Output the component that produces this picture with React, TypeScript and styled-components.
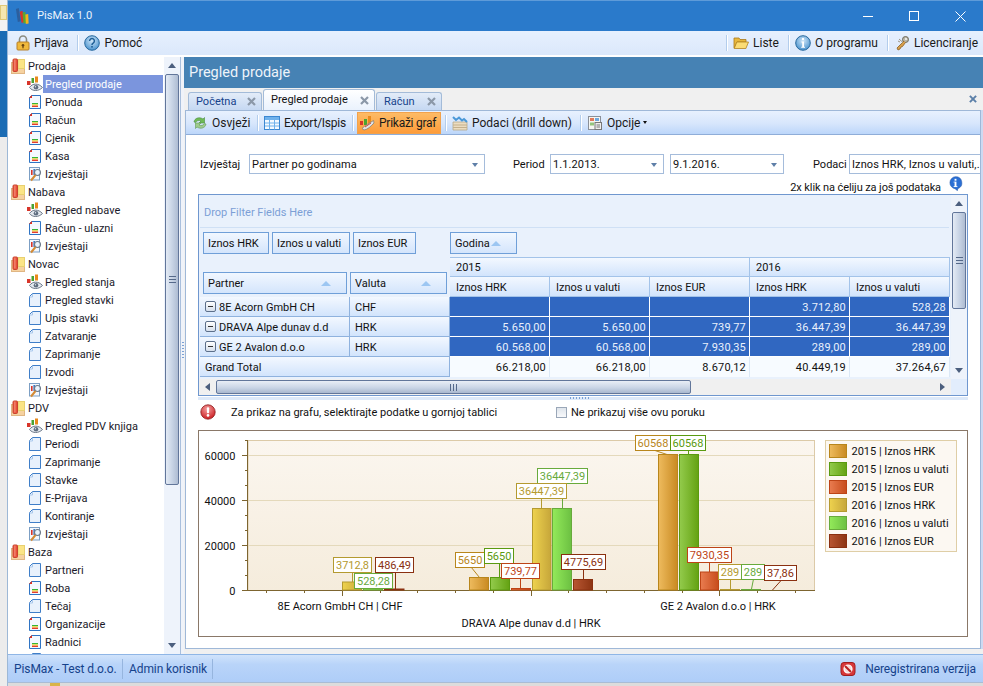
import React from "react";
import styled, { createGlobalStyle } from "styled-components";

const FONT = `Roboto, "Noto Sans", "Liberation Sans", sans-serif`;

const Global = createGlobalStyle`
  html, body { margin: 0; padding: 0; width: 983px; height: 686px; overflow: hidden; background: #e4e4e4; }
  #root { width: 983px; height: 686px; }
  * { box-sizing: border-box; }
`;

const Page = styled.div`
  display: flex; width: 983px; height: 686px; overflow: hidden;
  font: 11px/14px ${FONT}; color: #111;
`;
const DesktopStrip = styled.div`
  width: 7px; flex: none; display: flex; flex-direction: column;
  background: #ececec;
`;
const StripTop = styled.div`
  height: 31px; padding-top: 5px; background: #f2f2f2;
  &::before { content: ""; display: block; height: 13px; background: #f6e7b0; border: 1px solid #e0c878; }
`;
const StripBlue = styled.div`height: 106px; background: #1b6cb4;`;
const Win = styled.div`
  flex: 1; min-width: 0; display: flex; flex-direction: column;
  border-left: 1px solid #9db8d6;
`;
const TitleBar = styled.div`
  height: 31px; flex: none; display: flex; align-items: center; padding-left: 7px;
  background: #2a7acb; border-top: 1px solid #5e9bd9; color: #fff;
`;
const TitleText = styled.span`font-size: 11.2px; margin-left: 6px; flex: 1; color: #eaf3fc;`;
const WinBtn = styled.div`width: 46px; height: 30px; display: flex; align-items: center; justify-content: center;`;

const MainBar = styled.div`
  height: 26px; flex: none; display: flex; align-items: center; padding: 0 4px 0 7px; font-size: 12px;
  background: linear-gradient(#e6f0fe, #dbe8fb);
  border-bottom: 2px solid; border-image: linear-gradient(#9cbde6 50%, #fff 50%) 1;
`;
const ToolSep = styled.span<{ $ml?: number }>`
  width: 1px; height: 16px; background: #b3cdec; box-shadow: 1px 0 0 #fff; flex: none;
  margin: 0 5px 0 ${(p) => p.$ml ?? 8}px;
`;
const ToolItem = styled.div<{ $active?: boolean; $w?: number; $tight?: boolean }>`
  display: flex; align-items: center; gap: 4px; white-space: nowrap; height: 22px; padding: 0 1px;
  color: #1a1a1a; flex: none;
  ${(p) => p.$w && `width: ${p.$w}px;`}
  ${(p) => p.$tight && `letter-spacing: -0.25px;`}
  ${(p) => p.$active && `background: linear-gradient(#fdbb66, #fd9c3a); border: 1px solid #f2a24c; margin-left: -1px;`}
`;
const Spacer = styled.div`flex: 1;`;

const Body = styled.div`flex: 1; min-height: 0; display: flex;`;
const Sidebar = styled.div`width: 156px; flex: none; overflow: hidden; background: #fff;`;
const GroupRow = styled.div`height: 18px; display: flex; align-items: center; padding-left: 2px; gap: 2px; color: #1a1a2a;`;
const GroupLabel = styled.span`padding-top: 2px;`;
const ItemRow = styled.div`height: 18px; display: flex; align-items: center; padding-left: 18px;`;
const IconSlot = styled.div`width: 17px; flex: none; display: flex; justify-content: center;`;
const ItemLabel = styled.div<{ $active?: boolean }>`
  flex: 1; height: 18px; line-height: 20px; padding-left: 2px; margin-right: 1px;
  color: ${(p) => (p.$active ? "#fff" : "#1a1a2a")};
  background: ${(p) => (p.$active ? "#7b95dd" : "transparent")};
`;

const Scroll = styled.div<{ $vertical?: boolean; $bg?: string; $width?: number }>`
  display: flex; align-items: stretch; flex: none;
  flex-direction: ${(p) => (p.$vertical ? "column" : "row")};
  background: ${(p) => p.$bg || "#eef3fb"};
  ${(p) => p.$width && `width: ${p.$width}px;`}
`;
const ScrollBtn = styled.div<{ $dir: "up" | "down" | "left" | "right" }>`
  flex: none; display: flex; align-items: center; justify-content: center;
  ${(p) => (p.$dir === "up" || p.$dir === "down" ? "height: 17px;" : "width: 17px;")}
  ${(p) => p.$dir === "right" && "margin-left: auto;"}
  ${(p) => p.$dir === "down" && "margin-top: auto;"}
  &::before {
    content: ""; width: 0; height: 0; border-style: solid;
    ${(p) =>
      p.$dir === "up"
        ? "border-width: 0 4.5px 5px; border-color: transparent transparent #4c5f7e;"
        : p.$dir === "down"
        ? "border-width: 5px 4.5px 0; border-color: #4c5f7e transparent transparent;"
        : p.$dir === "left"
        ? "border-width: 4.5px 5px 4.5px 0; border-color: transparent #4c5f7e transparent transparent;"
        : "border-width: 4.5px 0 4.5px 5px; border-color: transparent transparent transparent #4c5f7e;"}
  }
`;
const Thumb = styled.div<{ $vertical?: boolean; $size: number }>`
  flex: none; display: flex; align-items: center; justify-content: center;
  border: 1px solid #62769a; border-radius: 2px;
  ${(p) =>
    p.$vertical
      ? `height: ${p.$size}px; margin: 0 1px; background: linear-gradient(90deg, #e4ebf5, #c6d2e4 55%, #aebcd2);`
      : `width: ${p.$size}px; margin: 1px 0; background: linear-gradient(#e9eef6, #cad5e6 55%, #a9b8cf);`}
`;
const Grip = styled.div<{ $vertical?: boolean }>`
  ${(p) =>
    p.$vertical
      ? `width: 7px; height: 7px; background: repeating-linear-gradient(#55698a 0 1px, transparent 1px 3px);`
      : `width: 7px; height: 7px; background: repeating-linear-gradient(90deg, #55698a 0 1px, transparent 1px 3px);`}
`;
const SideSplit = styled.div`
  width: 4px; flex: none; display: flex; align-items: center; background: #f0f3f9;
  border-left: 1px solid #a9bfdc; padding-bottom: 10px;
  &::before { content: ""; width: 2px; height: 18px; margin-left: 1px; background: repeating-linear-gradient(#7aa0d4 0 1px, transparent 1px 3px); }
`;

const Main = styled.div`flex: 1; min-width: 0; display: flex; flex-direction: column; background: #f0f0f0;`;
const MainHead = styled.div`
  height: 31px; flex: none; display: flex; align-items: center; padding: 1px 0 0 5px;
  background: #4682b4; color: #eef4fa; font-size: 14.5px;
`;
const TabStrip = styled.div`height: 22px; flex: none; display: flex; align-items: flex-end; padding-left: 4px;`;
const Tab = styled.div<{ $active?: boolean; $w: number }>`
  width: ${(p) => p.$w}px; display: flex; align-items: center; justify-content: space-between;
  border: 1px solid #a3bbd8; border-bottom: none; border-radius: 3px 3px 0 0;
  margin-right: 1px; padding: 0 5px 0 7px;
  ${(p) =>
    p.$active
      ? `height: 21px; background: linear-gradient(#fff, #eaf2fd); color: #111;`
      : `height: 18px; background: linear-gradient(#e3ecf8, #c5d8f2); color: #15428b;`}
`;
const TabClose = styled.div`margin-left: auto;`;
const StripClose = styled.div`margin-left: auto; margin-right: 6px; align-self: center;`;

const TabPanel = styled.div`
  flex: 1; min-height: 0; display: flex; flex-direction: column; margin-left: 1px; margin-bottom: 5px;
  background: #fff; border: 1px solid #9fb8d8; border-top: none;
  box-shadow: 3px 0 0 #cdd9f1;
  width: 796px;
`;
const PanelBar = styled.div`
  height: 25px; flex: none; display: flex; align-items: center; padding-left: 5px; font-size: 12px;
  background: linear-gradient(#e8f1fe, #d7e6fc 55%, #bcd6fa);
  border-bottom: 1px solid #8fadd8; border-top: 1px solid #9fb8d8;
`;
const Caret = styled.span`width: 0; height: 0; margin-left: -1px; border-style: solid; border-width: 3px 2.5px 0; border-color: #111 transparent transparent;`;

const FormRow = styled.div`display: flex; align-items: center; height: 20px; margin-top: 19px; padding-left: 14px; white-space: nowrap;`;
const FormLabel = styled.span<{ $left?: number; $w: number }>`
  width: ${(p) => p.$w}px; flex: none; padding: 2px 0 0 ${(p) => p.$left || 0}px;
`;
const Select = styled.div<{ $w: number; $plain?: boolean }>`
  width: ${(p) => p.$w}px; height: 20px; flex: none; display: flex; align-items: center; justify-content: space-between;
  border: 1px solid #a5bcdb; padding: 2px 6px 0 2px; background: #fff; overflow: hidden; letter-spacing: 0.1px;
  ${(p) => p.$plain && "border-right: none; padding-right: 0;"}
`;
const SelectArrow = styled.span`width: 0; height: 0; border-style: solid; border-width: 4px 3.5px 0; border-color: #5f7fa8 transparent transparent;`;
const HintRow = styled.div`display: flex; justify-content: flex-end; align-items: flex-start; height: 20px; padding: 2px 17px 0 0; gap: 7px;`;
const HintText = styled.span`margin-top: 5px; letter-spacing: -0.1px;`;

const Pivot = styled.div`
  margin-left: 12px; width: 770px; height: 202px; flex: none;
  display: grid; grid-template-columns: 1fr 16px; grid-template-rows: 1fr 16px;
  border: 1px solid #6f97cf; background: #e9f1fc;
`;
const PivotInner = styled.div`min-width: 0; display: flex; flex-direction: column; padding-left: 1px;`;
const FilterArea = styled.div`height: 33px; flex: none; display: flex; align-items: center; padding: 4px 0 0 4px; color: #7c9fd6; border-bottom: 1px solid #cfe0f5; width: 749px;`;
const DataFields = styled.div`height: 29px; flex: none; display: flex; align-items: flex-start; padding: 4px 0 0 3px; gap: 3px;`;
const Chip = styled.div<{ $w: number; $gapLeft?: number; $sorted?: boolean }>`
  width: ${(p) => p.$w}px; height: 22px; flex: none; display: flex; align-items: center; justify-content: space-between;
  margin-left: ${(p) => p.$gapLeft || 0}px; padding: 2px ${(p) => (p.$sorted ? 15 : 4)}px 0 4px;
  border: 1px solid #6f9fd8; background: linear-gradient(#f1f7ff, #d4e5fc);
  white-space: nowrap;
`;
const ChipSort = styled.span`width: 0; height: 0; margin-top: -2px; border-style: solid; border-width: 0 5px 5px; border-color: transparent transparent #9cc6f2;`;
const HeadBlock = styled.div`height: 40px; flex: none; display: grid; grid-template-columns: 250px 1fr;`;
const RowFields = styled.div`display: flex; align-items: flex-end; gap: 3px; padding: 0 0 3px 3px;`;
const ColHeads = styled.div`display: grid; grid-template-columns: repeat(5, 100px); grid-template-rows: 20px 20px;`;
const HeadCell = styled.div<{ $span?: number; $top?: boolean }>`
  ${(p) => p.$span && `grid-column: span ${p.$span};`}
  ${(p) => p.$top && `border-top: 1px solid #a3c3e9;`}
  display: flex; align-items: center; padding: 2px 0 0 6px; white-space: nowrap;
  background: linear-gradient(#f3f8ff, #d2e4fc);
  border-right: 1px solid #a3c3e9; border-bottom: 1px solid #a3c3e9;
`;
const DataRow = styled.div`height: 20px; flex: none; display: grid; grid-template-columns: 150px 100px repeat(5, 100px);`;
const RowHead = styled.div<{ $span?: number }>`
  ${(p) => p.$span && `grid-column: span ${p.$span};`}
  display: flex; align-items: center; gap: 3px; padding: 2px 0 0 5px; white-space: nowrap;
  background: linear-gradient(#f3f8ff, #d2e4fc);
  border-right: 1px solid #8fb2de; border-bottom: 1px solid #8fb2de;
`;
const Expander = styled.span`
  width: 11px; height: 11px; margin-top: -2px; flex: none; display: flex; align-items: center; justify-content: center;
  border: 1px solid #5c6f8a; border-radius: 2px; background: linear-gradient(#fff, #d5dfec);
  &::before { content: ""; width: 5px; height: 1px; background: #333; }
`;
const ValueCell = styled.div<{ $total?: boolean }>`
  display: flex; align-items: center; justify-content: flex-end; padding: 2px 3px 0 0; letter-spacing: 0.2px;
  ${(p) =>
    p.$total
      ? `background: #f7fbff; color: #111; border-right: 1px solid #dbe8f6;`
      : `background: #3067c1; color: #eaf1fc; border-right: 1px solid #fff; border-bottom: 1px solid #fff;`}
`;
const PivotCorner = styled.div`background: #e2edfc;`;
const SplitBar = styled.div`
  margin: 1px 0 0 12px; width: 770px; height: 3px; flex: none; background: #dde9f9;
  display: flex; justify-content: center;
  &::before { content: ""; width: 20px; height: 2px; margin-left: -7px; background: repeating-linear-gradient(90deg, #7aa0d4 0 1px, transparent 1px 3px); }
`;
const MsgRow = styled.div`height: 26px; flex: none; display: flex; align-items: center; padding: 0 0 2px 14px; white-space: nowrap;`;
const MsgText = styled.span`margin-left: 15px; width: 325px; flex: none; padding-top: 2px;`;
const MsgNote = styled.span`padding-top: 2px;`;
const Check = styled.span`width: 11px; height: 11px; flex: none; margin-right: 4px; border: 1px solid #9aa7b8; background: linear-gradient(#dfe5ec, #f8f9fb);`;
const ChartBox = styled.div`
  margin: 4px 0 0 12px; width: 770px; height: 207px; flex: none; border: 1px solid #8a7868; background: #fff; overflow: hidden;
`;
const ChartSvg = styled.svg`display: block; font: 11px ${FONT};`;

const Status = styled.div`
  height: 29px; flex: none; display: flex; align-items: center; padding: 0 5px 0 0; font-size: 12px; letter-spacing: -0.1px;
  background: linear-gradient(#d0e3fb, #b9d4f9 35%, #aecdf8);
  border-top: 1px solid #8fb6e6; border-bottom: 1px solid #a9bcd4; color: #15428b;
`;
const StatusCell = styled.div<{ $w: number }>`
  width: ${(p) => p.$w}px; height: 20px; display: flex; align-items: center; padding-left: 6px; border-right: 1px solid #96b5de; white-space: nowrap;
`;
const StatusRight = styled.div`margin-left: auto; display: flex; align-items: center; gap: 9px; white-space: nowrap; padding-right: 2px;`;
const BottomStrip = styled.div`
  height: 3px; flex: none; background: #dcdcdc; padding-left: 42px;
  &::before { content: ""; display: block; width: 10px; height: 3px; background: #d9b44a; }
`;

/* ---------- icons ---------- */
const S = (p: React.SVGProps<SVGSVGElement>) => <svg width={16} height={16} viewBox="0 0 16 16" style={{ display: "block", flex: "none" }} {...p} />;

const IconLogo = () => (
  <S width={16} height={18} viewBox="0 0 17 19">
    <path d="M1 2l3-1 2 14-3 1z" fill="#2c5f9e" />
    <path d="M5 5l3-1 2 12-3 1z" fill="#d8352a" />
    <path d="M8 6l3-1 1 12-3 .5z" fill="#5aa82e" />
    <path d="M11 8l3-.5.5 10-3 .5z" fill="#f2b41c" />
  </S>
);
const IconLock = () => (
  <S width={14} height={16} viewBox="1 0 14 16">
    <path d="M4.5 7V4.5a3.5 3.5 0 0 1 7 0V7" fill="none" stroke="#8b8b80" strokeWidth="1.6" />
    <rect x="2" y="7" width="12" height="8" rx="1" fill="#f0b93c" stroke="#b7802a" />
    <circle cx="8" cy="10.2" r="1.3" fill="#6a4512" />
    <rect x="7.4" y="10.5" width="1.2" height="2.8" fill="#6a4512" />
  </S>
);
const CircleIcon = ({ children, id }: { children: React.ReactNode; id: string }) => (
  <S>
    <defs>
      <radialGradient id={id} cx="50%" cy="35%" r="70%">
        <stop offset="0" stopColor="#cfe6f8" />
        <stop offset="1" stopColor="#3f8ccb" />
      </radialGradient>
    </defs>
    <circle cx="8" cy="8" r="7.3" fill={`url(#${id})`} stroke="#2a6a9e" />
    {children}
  </S>
);
const IconHelp = () => (
  <CircleIcon id="hlp">
    <path d="M5.6 6a2.4 2.4 0 1 1 3.6 2.1C8.4 8.6 8 9 8 10" fill="none" stroke="#1f5f96" strokeWidth="1.5" />
    <rect x="7.2" y="11" width="1.6" height="1.6" fill="#1f5f96" />
  </CircleIcon>
);
const IconInfo = () => (
  <CircleIcon id="inf">
    <rect x="7" y="3" width="2" height="2" fill="#fff" />
    <path d="M6.4 6.5H9v5.2h1v1H6.2v-1h1V7.5h-.8z" fill="#fff" />
  </CircleIcon>
);
const IconInfoBubble = () => (
  <S width={15} height={15}>
    <path d="M8 .7a6.6 6.6 0 0 1 2.4 12.8L10 15.6 7.6 13.6A6.5 6.5 0 0 1 8 .7z" fill="#2b6fd4" stroke="#1f56ac" strokeWidth=".6" />
    <rect x="7" y="3" width="2" height="2" fill="#fff" />
    <rect x="7" y="6" width="2" height="5.5" fill="#fff" />
    <rect x="6" y="6" width="1" height="1" fill="#fff" />
    <rect x="6" y="10.8" width="4" height="1" fill="#fff" />
  </S>
);
const IconFolderOpen = () => (
  <S>
    <path d="M1 3h5l1 1.5h6V7H4L1.5 13H1z" fill="#e8b83c" stroke="#a9791a" strokeWidth=".8" />
    <path d="M3.8 7H15.5l-2.6 6.5H1.2z" fill="#fbdc74" stroke="#b3831f" strokeWidth=".8" />
  </S>
);
const IconKeys = () => (
  <S>
    <circle cx="11.5" cy="4.5" r="3" fill="#b9b5a6" stroke="#6f6b5c" />
    <path d="M10 6L3 13l1 2 2-1 1-2 1.5-.5 3-4" fill="#d8a04c" stroke="#8a5e22" strokeWidth=".8" />
    <circle cx="12" cy="4" r=".9" fill="#fff" />
    <path d="M5 4l4 3.5M4 6l2 1" stroke="#9a9486" strokeWidth="1" />
  </S>
);
const IconFolderBook = () => (
  <S>
    <rect x="1.5" y="4.5" width="13" height="11" fill="#f6d2a0" stroke="#e0b684" />
    <rect x="8" y="1.5" width="6.5" height="9" fill="#fbe486" stroke="#e8d070" />
    <rect x="3" y="1" width="4.5" height="12.5" rx="1" fill="#e8503a" stroke="#c9442f" />
    <rect x="4.4" y="1.5" width="1" height="11" fill="#f59a84" />
  </S>
);
const IconChartEye = () => (
  <S width={17}>
    <rect x="0.5" y="5" width="3.5" height="4" fill="#d8352a" />
    <rect x="5" y="2" width="2.5" height="5" fill="#4aa332" />
    <rect x="8.5" y="0.5" width="3" height="6" fill="#e98a1c" />
    <path d="M3 11.5c3-4.5 9-4.5 13 0-4 4-10 4-13 0z" fill="#e4e9ef" stroke="#6c7888" />
    <circle cx="9.5" cy="11.3" r="2.3" fill="#5e6c7e" />
    <circle cx="9" cy="10.7" r=".7" fill="#dfe5ec" />
  </S>
);
const IconDoc = () => (
  <S>
    <path d="M4.5 1.5h9v13h-11v-11z" fill="#f4f8fe" stroke="#2f74c4" />
    <path d="M2 4l3-3v3z" fill="#e0301f" />
    <rect x="5" y="9" width="6" height="1.2" fill="#37b437" />
    <rect x="5" y="10.4" width="6" height="1.1" fill="#f2d21c" />
    <rect x="5" y="11.7" width="6" height="1.2" fill="#e4261a" />
  </S>
);
const IconBlank = () => (
  <S>
    <path d="M5.5 1.5h8v13h-11v-10z" fill="#e8f1fc" stroke="#3f7ec8" />
    <path d="M5.5 2v3h-3" fill="none" stroke="#a8c8ec" />
  </S>
);
const IconReport = () => (
  <S>
    <rect x="2.5" y="1.5" width="10" height="12.5" fill="#f4f8fd" stroke="#7c9fc4" />
    <rect x="4" y="4" width="1.6" height="5" fill="#d8352a" />
    <rect x="6.4" y="3" width="1.6" height="6" fill="#3b78c8" />
    <circle cx="10.5" cy="6.5" r="3" fill="#e9f2fb" fillOpacity=".8" stroke="#6c7a8a" strokeWidth="1.1" />
    <path d="M8.5 9L4 14.5" stroke="#d48a34" strokeWidth="2" />
  </S>
);
const IconRefresh = () => (
  <S>
    <path d="M2 7c.5-4 5.5-5.5 9-3l1.5-1.5V8H7l2-2C7 5 4.5 5.5 3.8 7.5z" fill="#6fbb55" stroke="#4a8c40" strokeWidth=".6" />
    <path d="M14 9c-.5 4-5.5 5.5-9 3l-1.5 1.5V8H9l-2 2c2 1 4.5.5 5.2-1.5z" fill="#9ecb8c" stroke="#5f9a55" strokeWidth=".6" />
  </S>
);
const IconTable = () => (
  <S>
    <rect x=".5" y="1.5" width="15" height="13" fill="#f4f9ff" stroke="#3b87d2" />
    <rect x="1" y="2" width="14" height="3" fill="#6fb1ec" />
    <path d="M1 8h14M1 11h14M5.5 5v9.5M10.5 5v9.5" stroke="#6fb1ec" strokeWidth="1" />
  </S>
);
const IconChartPen = () => (
  <S>
    <rect x="1" y="6" width="3" height="4" fill="#d8352a" />
    <rect x="5" y="4" width="3" height="6" fill="#4aa332" />
    <rect x="9" y="1" width="3" height="8" fill="#e98a1c" />
    <path d="M3 13.5c3-3 7-5 11.5-8L15 8c-3 3-6 6.5-10 7z" fill="#e3e3e3" stroke="#777" strokeWidth=".7" />
    <path d="M6 12l6-4" stroke="#c84a3a" />
  </S>
);
const IconDrill = () => (
  <S>
    <path d="M1 7h14v8H1z" fill="#ecdcc0" stroke="#b8a888" strokeWidth=".8" />
    <path d="M1 10h14M1 12.5h14" stroke="#c4b08c" />
    <path d="M1 2l3 3 3-2.5 3 3 2-1.5 3 3" fill="none" stroke="#4a98d8" strokeWidth="2" />
  </S>
);
const IconOptions = () => (
  <S>
    <rect x="1.5" y="1.5" width="12" height="13" fill="#f6f6f2" stroke="#8a8f98" />
    <rect x="3" y="3" width="4" height="3" fill="#e07a5a" />
    <rect x="8" y="3" width="4" height="3" fill="#6fa8dc" />
    <rect x="3" y="7.5" width="4" height="3" fill="#93c47d" />
    <rect x="8" y="7.5" width="6.5" height="7" fill="#eee" stroke="#777" />
    <path d="M9.5 10h3.5M9.5 12h3.5" stroke="#777" />
  </S>
);
const IconX = ({ color = "#8b98a8", size = 9 }: { color?: string; size?: number }) => (
  <svg width={size} height={size} viewBox="0 0 9 9" style={{ display: "block" }}>
    <path d="M1 1l7 7M8 1L1 8" stroke={color} strokeWidth="2.2" />
  </svg>
);
const IconAlert = () => (
  <S>
    <defs>
      <radialGradient id="alr" cx="45%" cy="30%" r="75%">
        <stop offset="0" stopColor="#f4a0a0" />
        <stop offset="1" stopColor="#c81418" />
      </radialGradient>
    </defs>
    <circle cx="8" cy="8" r="7.2" fill="url(#alr)" stroke="#8c1a1a" strokeWidth=".8" />
    <rect x="6.9" y="3.2" width="2.2" height="6" rx="1" fill="#fff" />
    <circle cx="8" cy="11.4" r="1.3" fill="#fff" />
  </S>
);
const IconNoEntry = () => (
  <S>
    <rect x="1" y="1.5" width="14" height="13" rx="3" fill="#d8383a" stroke="#a01c1e" />
    <circle cx="8" cy="8" r="4" fill="#f7dada" stroke="#fff" strokeWidth="1.2" />
    <path d="M5 5l6 6" stroke="#b8201f" strokeWidth="2" />
  </S>
);

/* ---------- data ---------- */
type Kind = "eye" | "doc" | "blank" | "rep";
const nav: { group: string; items: [string, Kind][] }[] = [
  { group: "Prodaja", items: [["Pregled prodaje", "eye"], ["Ponuda", "doc"], ["Račun", "doc"], ["Cjenik", "doc"], ["Kasa", "doc"], ["Izvještaji", "rep"]] },
  { group: "Nabava", items: [["Pregled nabave", "eye"], ["Račun - ulazni", "doc"], ["Izvještaji", "rep"]] },
  { group: "Novac", items: [["Pregled stanja", "eye"], ["Pregled stavki", "blank"], ["Upis stavki", "blank"], ["Zatvaranje", "blank"], ["Zaprimanje", "blank"], ["Izvodi", "blank"], ["Izvještaji", "rep"]] },
  { group: "PDV", items: [["Pregled PDV knjiga", "eye"], ["Periodi", "blank"], ["Zaprimanje", "blank"], ["Stavke", "blank"], ["E-Prijava", "blank"], ["Kontiranje", "blank"], ["Izvještaji", "rep"]] },
  { group: "Baza", items: [["Partneri", "blank"], ["Roba", "doc"], ["Tečaj", "blank"], ["Organizacije", "doc"], ["Radnici", "doc"], ["", "blank"]] },
];
const kindIcon = { eye: <IconChartEye />, doc: <IconDoc />, blank: <IconBlank />, rep: <IconReport /> };

const rows: { name: string; cur: string; vals: string[] }[] = [
  { name: "8E Acorn GmbH CH", cur: "CHF", vals: ["", "", "", "3.712,80", "528,28"] },
  { name: "DRAVA Alpe dunav d.d", cur: "HRK", vals: ["5.650,00", "5.650,00", "739,77", "36.447,39", "36.447,39"] },
  { name: "GE 2 Avalon d.o.o", cur: "HRK", vals: ["60.568,00", "60.568,00", "7.930,35", "289,00", "289,00"] },
];
const totals = ["66.218,00", "66.218,00", "8.670,12", "40.449,19", "37.264,67"];

const series = [
  { id: "s0", name: "2015 | Iznos HRK", a: "#eebb5e", b: "#c98a22", line: "#b8861c" },
  { id: "s1", name: "2015 | Iznos u valuti", a: "#93cb4c", b: "#64a212", line: "#5a9a10" },
  { id: "s2", name: "2015 | Iznos EUR", a: "#e97c50", b: "#c74c1c", line: "#bd4416" },
  { id: "s3", name: "2016 | Iznos HRK", a: "#eed24e", b: "#c6a63a", line: "#b49a30" },
  { id: "s4", name: "2016 | Iznos u valuti", a: "#93ea5a", b: "#6cc042", line: "#68aa3c" },
  { id: "s5", name: "2016 | Iznos EUR", a: "#b85632", b: "#8c3412", line: "#8a3010" },
];
const bars: [number, number, number, number][] = [
  [3, 342.5, 361.5, 582], [4, 363.5, 382.5, 588], [5, 384.5, 404, 589],
  [0, 469.5, 488.5, 577.5], [1, 490.5, 509.5, 577.5], [2, 511.5, 530.5, 588.5],
  [3, 532.5, 551, 508.5], [4, 552.5, 571.5, 508.5], [5, 573.5, 592.5, 579.5],
  [0, 658.5, 677.5, 454.5], [1, 679.5, 698.5, 454.5], [2, 700.5, 718.5, 572],
  [3, 720.5, 739.5, 589.5], [4, 741.5, 760.5, 589.5],
];
// series, text, box x0, x1, y0, line x1,y1,x2,y2
const labels: [number, string, number, number, number, number, number, number, number][] = [
  [3, "3712,8", 333.5, 371.5, 557.5, 352.5, 572, 352.5, 582],
  [4, "528,28", 354.5, 392.5, 573.5, 374.5, 588, 374.5, 589],
  [5, "486,49", 375.5, 413.5, 557.5, 395.5, 572, 395.5, 589],
  [0, "5650", 455.5, 484.5, 552.5, 471, 567, 479.5, 577.5],
  [1, "5650", 484.5, 513.5, 548.5, 499.5, 563, 499.5, 577.5],
  [2, "739,77", 501.5, 539.5, 563.5, 520.5, 578, 520.5, 588],
  [4, "36447,39", 537.5, 587.5, 468.5, 562.5, 483, 562.5, 508],
  [3, "36447,39", 516.5, 566.5, 483.5, 541.5, 498, 541.5, 508],
  [5, "4775,69", 561.5, 605.5, 554.5, 583.5, 569, 583.5, 579],
  [0, "60568", 635.5, 670.5, 435.5, 653.5, 450, 667, 454.5],
  [1, "60568", 670.5, 705.5, 435.5, 688.5, 450, 688.5, 454.5],
  [2, "7930,35", 687.5, 731.5, 547.5, 709.5, 562, 709.5, 572],
  [3, "289", 718.5, 741.5, 564.5, 730.5, 579, 730.5, 589],
  [4, "289", 741.5, 764.5, 564.5, 753.5, 579, 751.5, 589],
  [5, "37,86", 764.5, 796.5, 565.5, 781.5, 580, 772.5, 590],
];
const xMinor = [266, 304, 380, 417, 455, 493, 568, 606, 644, 682, 757, 795];
const xMajor = [342, 531, 719];
const yMajor: [number, string][] = [[455.5, "60000"], [500.5, "40000"], [545.5, "20000"], [590.5, "0"]];
const yMinor = [470.5, 485.5, 515.5, 530.5, 560.5, 575.5, 440.5];

const Chart = () => (
  <ChartSvg width={768} height={205} viewBox="199 431 768 205">
    <defs>
      <linearGradient id="plot" x1="0" y1="0" x2="0" y2="1">
        <stop offset="0" stopColor="#fbf6ef" />
        <stop offset="1" stopColor="#f5ecdc" />
      </linearGradient>
      {series.map((s) => (
        <linearGradient key={s.id} id={s.id} x1="0" y1="0" x2="1" y2="0">
          <stop offset="0" stopColor={s.a} />
          <stop offset="1" stopColor={s.b} />
        </linearGradient>
      ))}
    </defs>
    <rect x="248" y="440.5" width="566.5" height="150" fill="url(#plot)" stroke="#dccaa8" />
    {yMajor.slice(0, 3).map(([y]) => (
      <line key={y} x1="248" x2="814" y1={y} y2={y} stroke="#e4d9bb" />
    ))}
    <path d="M247.5 440v151M242 590.5h573" stroke="#7d6530" strokeWidth="1" fill="none" />
    {yMajor.map(([y, t]) => (
      <g key={t}>
        <line x1="242" x2="247" y1={y} y2={y} stroke="#7d6530" />
        <text x="235.5" y={y + 4} textAnchor="end" fill="#111">{t}</text>
      </g>
    ))}
    {yMinor.map((y) => <line key={y} x1="245" x2="247" y1={y} y2={y} stroke="#7d6530" />)}
    {xMinor.map((x) => <line key={x} x1={x + 0.5} x2={x + 0.5} y1="590" y2="593" stroke="#7d6530" />)}
    {xMajor.map((x) => <line key={x} x1={x + 0.5} x2={x + 0.5} y1="590" y2="596" stroke="#7d6530" />)}
    {bars.map(([s, x0, x1, y], i) => (
      <rect key={i} x={x0} y={y} width={x1 - x0} height={590 - y} fill={`url(#${series[s].id})`} stroke={series[s].line} />
    ))}
    {labels.map(([s, t, x0, x1, y0, a, b, c, d], i) => (
      <g key={i}>
        <line x1={a} y1={b} x2={c} y2={d} stroke={series[s].line} />
        <rect x={x0} y={y0} width={x1 - x0} height={15} fill="#fff" stroke={series[s].line} />
        <text x={(x0 + x1) / 2} y={y0 + 11.5} textAnchor="middle" fill={series[s].line}>{t}</text>
      </g>
    ))}
    <text x="340" y="610" textAnchor="middle" fill="#111">8E Acorn GmbH CH | CHF</text>
    <text x="531" y="627" textAnchor="middle" fill="#111">DRAVA Alpe dunav d.d | HRK</text>
    <text x="718" y="610" textAnchor="middle" fill="#111">GE 2 Avalon d.o.o | HRK</text>
    <rect x="825.5" y="440.5" width="131" height="111" fill="#fcf8f2" stroke="#dfcea6" />
    {series.map((s, i) => (
      <g key={s.id}>
        <rect x="829.5" y={444.5 + i * 18} width="17" height="13" fill={`url(#${s.id})`} stroke={s.line} />
        <text x="851.5" y={455 + i * 18} fill="#111">{s.name}</text>
      </g>
    ))}
  </ChartSvg>
);

export default function App() {
  return (
    <Page>
      <Global />
      <DesktopStrip>
        <StripTop />
        <StripBlue />
      </DesktopStrip>
      <Win>
        <TitleBar>
          <IconLogo />
          <TitleText>PisMax 1.0</TitleText>
          <WinBtn><svg width="10" height="10"><path d="M0 5.5h10" stroke="#fff" /></svg></WinBtn>
          <WinBtn><svg width="10" height="10"><rect x=".5" y=".5" width="9" height="9" fill="none" stroke="#fff" /></svg></WinBtn>
          <WinBtn><svg width="11" height="11"><path d="M.5.5l10 10M10.5.5l-10 10" stroke="#fff" /></svg></WinBtn>
        </TitleBar>
        <MainBar>
          <ToolItem $tight><IconLock />Prijava</ToolItem>
          <ToolSep />
          <ToolItem><IconHelp />Pomoć</ToolItem>
          <Spacer />
          <ToolSep />
          <ToolItem><IconFolderOpen />Liste</ToolItem>
          <ToolSep />
          <ToolItem><IconInfo />O programu</ToolItem>
          <ToolSep />
          <ToolItem><IconKeys />Licenciranje</ToolItem>
        </MainBar>
        <Body>
          <Sidebar>
            {nav.map((g) => (
              <React.Fragment key={g.group}>
                <GroupRow><IconFolderBook /><GroupLabel>{g.group}</GroupLabel></GroupRow>
                {g.items.map(([label, kind], i) => (
                  <ItemRow key={i}>
                    <IconSlot>{kindIcon[kind]}</IconSlot>
                    <ItemLabel $active={label === "Pregled prodaje"}>{label}</ItemLabel>
                  </ItemRow>
                ))}
              </React.Fragment>
            ))}
          </Sidebar>
          <Scroll $vertical $width={16}>
            <ScrollBtn $dir="up" />
            <Thumb $vertical $size={411}><Grip $vertical /></Thumb>
            <ScrollBtn $dir="down" />
          </Scroll>
          <SideSplit />
          <Main>
            <MainHead>Pregled prodaje</MainHead>
            <TabStrip>
              <Tab $w={74}>Početna<TabClose><IconX /></TabClose></Tab>
              <Tab $w={112} $active>Pregled prodaje<TabClose><IconX /></TabClose></Tab>
              <Tab $w={66}>Račun<TabClose><IconX /></TabClose></Tab>
              <StripClose><IconX color="#5b7fa8" size={8} /></StripClose>
            </TabStrip>
            <TabPanel>
              <PanelBar>
                <ToolItem $w={62}><IconRefresh />Osvježi</ToolItem>
                <ToolSep $ml={4} />
                <ToolItem $w={85} $tight><IconTable />Export/Ispis</ToolItem>
                <ToolSep $ml={4} />
                <ToolItem $w={84} $active $tight><IconChartPen />Prikaži graf</ToolItem>
                <ToolSep $ml={4} />
                <ToolItem $w={125}><IconDrill />Podaci (drill down)</ToolItem>
                <ToolSep $ml={4} />
                <ToolItem><IconOptions />Opcije<Caret /></ToolItem>
              </PanelBar>
              <FormRow>
                <FormLabel $w={49}>Izvještaj</FormLabel>
                <Select $w={236}>Partner po godinama<SelectArrow /></Select>
                <FormLabel $w={65} $left={28}>Period</FormLabel>
                <Select $w={114}>1.1.2013.<SelectArrow /></Select>
                <FormLabel $w={6} />
                <Select $w={114}>9.1.2016.<SelectArrow /></Select>
                <FormLabel $w={65} $left={29}>Podaci</FormLabel>
                <Select $w={131} $plain>Iznos HRK, Iznos u valuti,.</Select>
              </FormRow>
              <HintRow><HintText>2x klik na ćeliju za još podataka</HintText><IconInfoBubble /></HintRow>
              <Pivot>
                <PivotInner>
                  <FilterArea>Drop Filter Fields Here</FilterArea>
                  <DataFields>
                    <Chip $w={66}>Iznos HRK</Chip>
                    <Chip $w={78}>Iznos u valuti</Chip>
                    <Chip $w={63}>Iznos EUR</Chip>
                    <Chip $w={67} $gapLeft={31} $sorted>Godina<ChipSort /></Chip>
                  </DataFields>
                  <HeadBlock>
                    <RowFields>
                      <Chip $w={144} $sorted>Partner<ChipSort /></Chip>
                      <Chip $w={97} $sorted>Valuta<ChipSort /></Chip>
                    </RowFields>
                    <ColHeads>
                      <HeadCell $span={3} $top>2015</HeadCell>
                      <HeadCell $span={2} $top>2016</HeadCell>
                      {["Iznos HRK", "Iznos u valuti", "Iznos EUR", "Iznos HRK", "Iznos u valuti"].map((h, i) => (
                        <HeadCell key={i}>{h}</HeadCell>
                      ))}
                    </ColHeads>
                  </HeadBlock>
                  {rows.map((r) => (
                    <DataRow key={r.name}>
                      <RowHead><Expander />{r.name}</RowHead>
                      <RowHead>{r.cur}</RowHead>
                      {r.vals.map((v, i) => <ValueCell key={i}>{v}</ValueCell>)}
                    </DataRow>
                  ))}
                  <DataRow>
                    <RowHead $span={2}>Grand Total</RowHead>
                    {totals.map((v, i) => <ValueCell key={i} $total>{v}</ValueCell>)}
                  </DataRow>
                </PivotInner>
                <Scroll $vertical>
                  <ScrollBtn $dir="up" />
                  <Thumb $vertical $size={97}><Grip $vertical /></Thumb>
                  <ScrollBtn $dir="down" />
                </Scroll>
                <Scroll $bg="#f0f0f0">
                  <ScrollBtn $dir="left" />
                  <Thumb $size={475}><Grip /></Thumb>
                  <ScrollBtn $dir="right" />
                </Scroll>
                <PivotCorner />
              </Pivot>
              <SplitBar />
              <MsgRow>
                <IconAlert />
                <MsgText>Za prikaz na grafu, selektirajte podatke u gornjoj tablici</MsgText>
                <Check />
                <MsgNote>Ne prikazuj više ovu poruku</MsgNote>
              </MsgRow>
              <ChartBox><Chart /></ChartBox>
            </TabPanel>
          </Main>
        </Body>
        <Status>
          <StatusCell $w={115}>PisMax - Test d.o.o.</StatusCell>
          <StatusCell $w={90}>Admin korisnik</StatusCell>
          <StatusRight><IconNoEntry />Neregistrirana verzija</StatusRight>
        </Status>
        <BottomStrip />
      </Win>
    </Page>
  );
}
